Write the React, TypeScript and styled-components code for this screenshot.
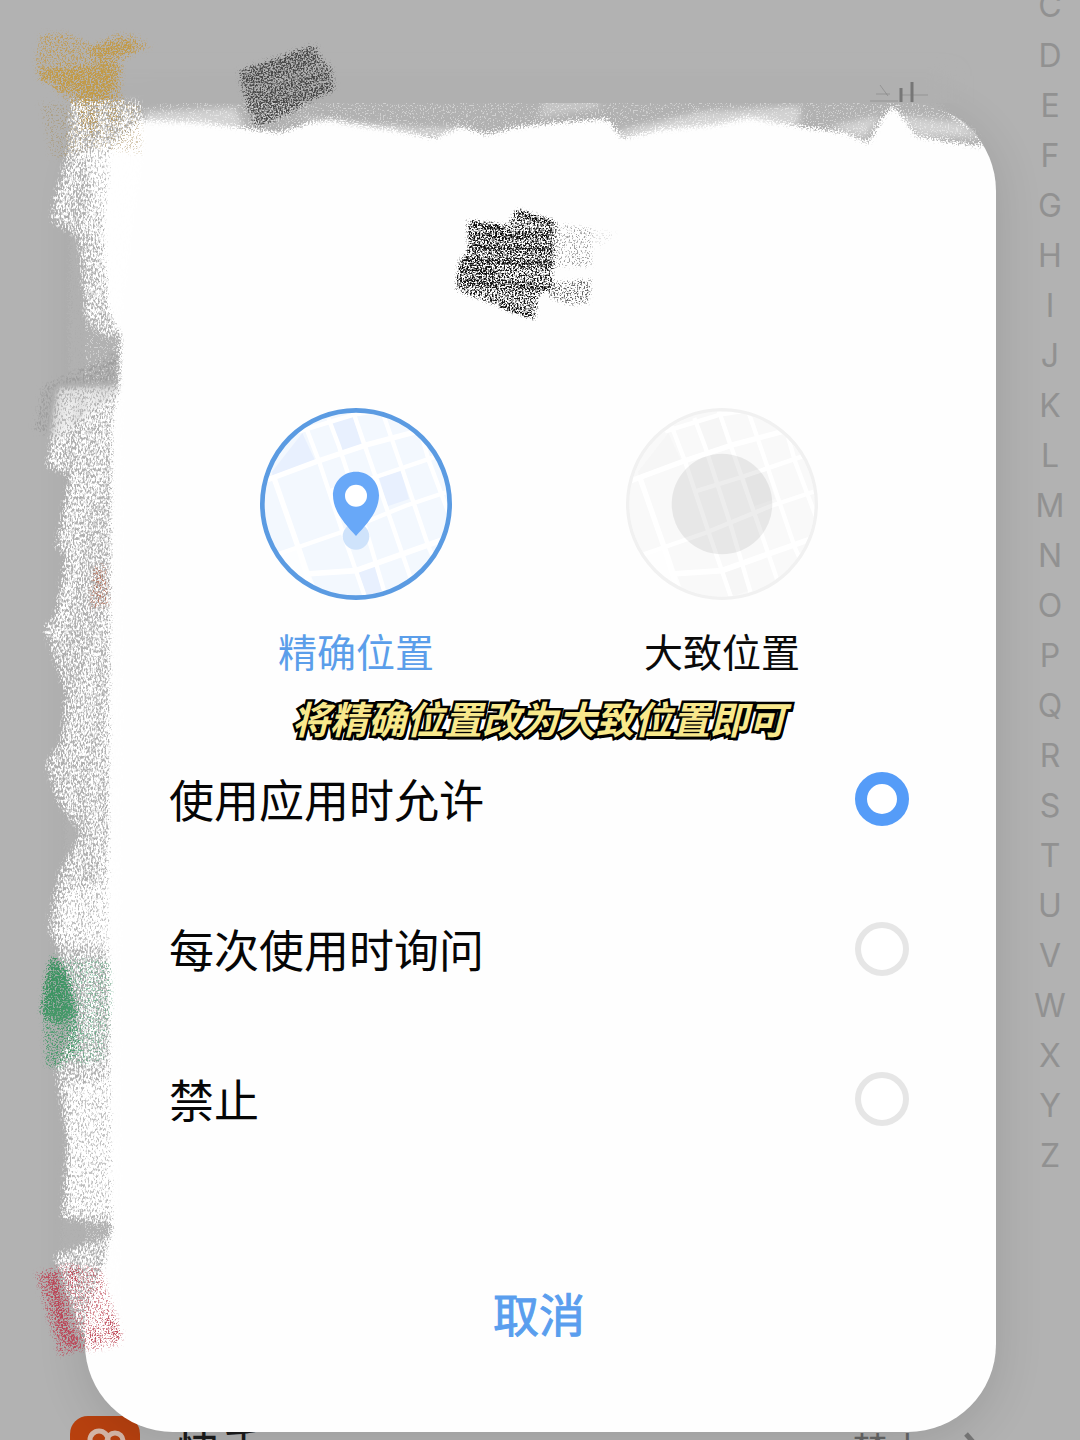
import React, { useState } from "react";
import styled, { createGlobalStyle } from "styled-components";

const GlobalStyle = createGlobalStyle`
  *, *::before, *::after { box-sizing: border-box; }
  body {
    margin: 0;
    background: #b2b2b2;
    font-family: "Noto Sans CJK SC", "Noto Sans", sans-serif;
  }
`;

const Screen = styled.div`
  position: relative;
  display: grid;
  grid-template: 100vh / 1fr;
  overflow: hidden;
  background: #b2b2b2;
  & > * { grid-area: 1 / 1; }
`;

/* ---------- app list behind the dialog ---------- */

const Backdrop = styled.div`
  display: flex;
  justify-content: space-between;
  min-height: 0;
`;

const AppList = styled.main`
  flex: 1;
  display: flex;
  flex-direction: column;
  justify-content: flex-end;
  margin-bottom: -46px;
  padding-left: 70px;
`;

const AppRow = styled.div`
  display: flex;
  align-items: flex-start;
  height: 70px;
  padding-right: 36px;
`;

const AppIcon = styled.svg`
  width: 70px;
  height: 70px;
  border-radius: 18px;
  background: #b8410f;
`;

const AppName = styled.span`
  flex: 1;
  margin-left: 36px;
  color: #1c1c1c;
  font-size: 45px;
  line-height: 64px;
`;

const AppState = styled.span`
  color: #666;
  font-size: 36px;
  line-height: 64px;
`;

const Chevron = styled.svg`
  width: 20px;
  height: 38px;
  margin: 16px 0 0 40px;
`;

const LetterIndex = styled.nav`
  display: flex;
  flex-direction: column;
  width: 60px;
  margin-top: -19px;
`;

const Letter = styled.a`
  flex: none;
  height: 50px;
  color: #919191;
  font-family: Inter, "Liberation Sans", sans-serif;
  font-size: 32px;
  font-weight: 400;
  line-height: 50px;
  text-align: center;
  text-decoration: none;
`;

/* ---------- dialog ---------- */

const Dialog = styled.section`
  align-self: end;
  display: flex;
  flex-direction: column;
  margin: 0 84px 8px 85px;
  padding: 0 87px 80px 84px;
  border-radius: 88px;
  background: #fefefe;
  box-shadow: 0 10px 50px rgba(0, 0, 0, 0.12);
`;

const Header = styled.header`
  display: flex;
  justify-content: center;
  height: 305px;
  padding-top: 95px;
`;

const HeaderArt = styled.svg`
  width: 180px;
  height: 130px;
`;

const Group = styled.fieldset`
  margin: 0;
  padding: 0;
  border: 0;
  min-width: 0;
`;

const AccuracyGroup = styled(Group)`
  display: flex;
  justify-content: center;
  gap: 174px;
`;

const AccuracyChoice = styled.label<{ $on: boolean }>`
  display: flex;
  flex-direction: column;
  align-items: center;
  gap: 23px;
  width: 192px;
  padding-bottom: 3px;
  color: ${(p) => (p.$on ? "#5b9eea" : "#0a0a0a")};
  font-size: 39px;
  line-height: 54px;
  white-space: nowrap;
  cursor: pointer;
`;

const HiddenRadio = styled.input`
  position: absolute;
  opacity: 0;
  pointer-events: none;
`;

const MapArt = styled.svg`
  width: 192px;
  height: 192px;
`;

const Caption = styled.p`
  margin: 0;
  padding-bottom: 3px;
  color: #f8e88c;
  font-size: 38px;
  font-style: italic;
  font-weight: 700;
  line-height: 76px;
  text-align: center;
  white-space: nowrap;
  -webkit-text-stroke: 5px #000;
  paint-order: stroke fill;
  text-shadow: 2px 3px 0 #000;
`;

const OptionGroup = styled(Group)`
  display: flex;
  flex-direction: column;
  gap: 70px;
`;

const Option = styled.label`
  display: flex;
  align-items: center;
  justify-content: space-between;
  height: 80px;
  color: #060606;
  font-size: 45px;
  line-height: 80px;
  cursor: pointer;
`;

const Radio = styled.input`
  appearance: none;
  width: 54px;
  height: 54px;
  margin: 0;
  border: 6px solid #e6e6e6;
  border-radius: 50%;
  background: #fff;
  &:checked { border: 12px solid #559cf8; }
`;

const CancelButton = styled.button`
  align-self: center;
  height: 80px;
  margin-top: 133px;
  padding: 0 40px;
  border: 0;
  background: none;
  color: #5a9eee;
  font: inherit;
  font-size: 46px;
  line-height: 80px;
  -webkit-text-stroke: 1px #5a9eee;
  cursor: pointer;
`;

const ChalkLayer = styled.svg`
  position: absolute;
  top: 0;
  left: 0;
  width: 100%;
  pointer-events: none;
`;

/* ---------- drawings ---------- */

type Palette = { land: string; block: string; ring: string; ringWidth: number };

const precise: Palette = { land: "#f3f8fe", block: "#e8f0fe", ring: "#5b9be2", ringWidth: 14 };
const rough: Palette = { land: "#f9f9f9", block: "#f6f6f6", ring: "#f1f1f1", ringWidth: 10 };

function CityMap({ id, palette, children }: { id: string; palette: Palette; children: React.ReactNode }) {
  return (
    <MapArt viewBox="63 55 576 576" aria-hidden="true">
      <clipPath id={id}><circle cx="351" cy="343" r="278" /></clipPath>
      <g clipPath={`url(#${id})`}>
        <rect x="63" y="55" width="576" height="576" fill={palette.land} />
        <g fill={palette.block}>
          <path d="M100 245 190 130 228 212 100 258Z" />
          <path d="M278 98 340 76 368 165 306 184Z" />
          <path d="M420 264 486 243 510 328 446 350Z" />
          <path d="M358 548 412 528 440 600 384 620Z" />
        </g>
        <g fill="none" stroke="#fff" strokeWidth="13">
          <path d="M60 280 235 215 385 165 600 108" strokeWidth="16" />
          <path d="M180 125 345 75 440 60" />
          <path d="M268 306 410 262 640 184" />
          <path d="M110 496 300 430 500 348 650 298" />
          <path d="M200 553 350 543 640 440" strokeWidth="17" />
          <path d="M196 100 240 215 310 425 384 640" />
          <path d="M268 85 300 170 375 400 446 640" />
          <path d="M342 65 385 190 460 405 520 580" />
          <path d="M428 60 485 225 570 475 600 540" />
          <path d="M540 110 570 215 640 400" />
          <path d="M104 262 180 480 230 640" strokeWidth="16" />
        </g>
        <path d="M95 495 185 468 214 552 240 620 150 580Z" fill="#fff" opacity=".8" />
      </g>
      {children}
      <circle cx="351" cy="343" r={288 - palette.ringWidth / 2} fill="none" stroke={palette.ring} strokeWidth={palette.ringWidth} />
    </MapArt>
  );
}

function Grain({ id, blur, frequency }: { id: string; blur: number; frequency: string }) {
  return (
    <filter id={id} filterUnits="userSpaceOnUse" x="0" y="0" width="1080" height="1440" colorInterpolationFilters="sRGB">
      <feGaussianBlur in="SourceGraphic" stdDeviation={blur} result="soft" />
      <feColorMatrix in="soft" values="0 0 0 0 0  0 0 0 0 0  0 0 0 0 0  0 0 0 1 0" result="shape" />
      <feTurbulence type="fractalNoise" baseFrequency={frequency} numOctaves="2" seed="4" />
      <feColorMatrix values="0 0 0 0 0  0 0 0 0 0  0 0 0 0 0  3 0 0 0 -1" result="noise" />
      <feComposite in="shape" in2="noise" operator="arithmetic" k2="2.2" k3="1.6" k4="-1.6" result="mask" />
      <feComponentTransfer in="soft" result="ink">
        <feFuncA type="linear" slope="3" />
      </feComponentTransfer>
      <feComposite in="ink" in2="mask" operator="in" />
    </filter>
  );
}

function HeaderScribble() {
  return (
    <HeaderArt viewBox="450 198 180 130" aria-hidden="true">
      <defs><Grain id="ink" blur={2} frequency="0.6" /></defs>
      <g filter="url(#ink)">
        <path d="M467 219 508 224 517 208 556 220 554 286 540 296 537 321 456 291 458 262 468 250Z" fill="#161616" opacity=".5" />
        <g fill="none" stroke="#050505" strokeWidth="5" opacity=".45">
          <path d="M472 223 505 229M518 212 553 222M470 237 552 235M470 247 553 250M463 260 552 264M460 268 500 274M458 280 552 289M500 305 532 316" />
        </g>
        <path d="M552 221 594 228 594 268 552 268Z" fill="#444" opacity=".27" />
        <path d="M552 281 594 278 592 304 570 306 548 298Z" fill="#444" opacity=".38" />
        <path d="M590 228 620 232 600 250Z" fill="#bbb" opacity=".25" />
      </g>
    </HeaderArt>
  );
}

function Chalk() {
  return (
    <ChalkLayer viewBox="0 0 1080 1440" aria-hidden="true">
      <defs>
        <Grain id="chalk" blur={3} frequency="0.6" />
        <Grain id="chalkStreak" blur={3} frequency="0.6 0.32" />
        <filter id="smudge" x="-10%" y="-60%" width="120%" height="220%"><feGaussianBlur stdDeviation="10" /></filter>
        <clipPath id="sheetTop"><rect x="0" y="103" width="1080" height="1337" /></clipPath>
        <clipPath id="aboveSheet"><rect x="0" y="0" width="1080" height="103" /></clipPath>
      </defs>

      <g clipPath="url(#aboveSheet)">
        <rect x="90" y="76" width="860" height="40" fill="#b0b0b0" filter="url(#smudge)" />
      </g>
      <g clipPath="url(#sheetTop)">
        <g filter="url(#chalk)">
          <path
            fill="#b1b1b1"
            d="M70 90H925L950 112 975 130 984 147 940 141 915 136 903 118 893 106 884 116 868 144 845 133 800 127 750 117 715 124 660 129 622 139 607 119 560 123 520 127 485 135 460 126 435 139 395 130 360 125 330 119 310 123 280 133 240 128 200 122 140 120 110 150 104 230 108 310 121 336 119 388 112 420 110 640 108 900 110 1100 112 1230 105 1260 80 1335H60Z"
          />
          <path fill="#fff" opacity=".42" d="M145 112 235 108 245 128 145 132ZM300 118 420 128 470 128 440 137 330 130ZM620 130 700 112 800 106 800 124 620 138ZM830 126 880 116 865 138ZM900 116 960 122 980 138 920 136Z" />
          <path fill="#fff" opacity=".25" d="M545 85 590 78 600 108 540 118Z" />
        </g>
      </g>

      <g filter="url(#chalkStreak)">
        <path fill="#9d9d9d" opacity=".5" d="M42 385 120 350 118 390 55 440 32 430Z" />
        <path
          fill="#fff"
          opacity=".56"
          d="M70 98 142 100 145 150 118 340 100 336 84 318 77 238 50 222 52 202 66 152ZM58 388 125 386 122 1228 60 1220 66 1140 54 1072 76 1008 58 955 46 925 58 872 80 832 58 806 44 765 60 740 64 692 42 626 53 618 64 556 54 548 68 476 45 468ZM52 1254 122 1230 124 1348 90 1355Z"
        />
        <g fill="none" stroke="#fff" strokeWidth="8" opacity=".36">
          <path d="M84 104 78 160 62 212M105 108 94 200 96 260M125 112 112 230 100 270M110 160 84 230M108 240 92 320" />
          <path d="M72 400 56 462M92 395 74 500 66 545M108 400 94 500M88 480 68 610M76 560 58 640M112 600 80 700 68 760M96 680 76 780M112 700 92 800M66 780 76 810" />
          <path d="M80 850 66 930M94 800 104 900 88 950M112 840 106 960M72 1080 76 1210M88 1060 90 1215M106 1050 104 1210M90 960 92 1060" />
          <path d="M66 1258 84 1340M84 1250 96 1350" />
        </g>
        <path fill="#fff" opacity=".5" d="M84 150 148 130 135 200 122 320 112 300 100 220ZM62 890 118 880 120 945 58 945ZM68 1085 120 1075 120 1215 68 1215Z" />
      </g>

      <g filter="url(#chalk)">
        <path fill="#c09c54" opacity=".42" d="M40 32 70 32 94 44 115 32 136 34 155 46 125 60 122 95 130 102 72 105 36 78 34 56Z" />
        <path fill="none" stroke="#c4993f" strokeWidth="12" opacity=".5" d="M92 52 134 46M40 76 118 70M58 86 116 84M78 96 110 94M104 60 110 90" />
        <path fill="#a88b58" opacity=".27" d="M38 100 72 104 142 102 144 156 92 150 68 160 50 160Z" />
        <path fill="none" stroke="#c69b4d" strokeWidth="5" opacity=".45" d="M84 106 86 128M96 108 92 132M112 106 114 122" />
        <path fill="#505050" opacity=".48" d="M237 70 316 43 323 60 332 64 336 90 256 130 245 106Z" />
        <path fill="none" stroke="#3b3b3b" strokeWidth="6" opacity=".4" d="M241 74 314 49M243 84 320 58M248 98 328 74M250 108 332 88M256 122 300 106" />
        <path fill="#b1664f" opacity=".38" d="M92 566 108 562 110 607 88 610Z" />
        <path fill="#3f9463" opacity=".8" d="M52 952 68 975 76 1012 60 1024 40 1015 44 980Z" />
        <path fill="#4a9a6c" opacity=".46" d="M42 1010 76 1008 78 1050 62 1070 44 1068Z" />
        <path fill="#4ea277" opacity=".3" d="M60 955 112 958 114 1005 106 1062 74 1068Z" />
        <path fill="#bd5564" opacity=".48" d="M34 1272 58 1266 84 1350 58 1358Z" />
        <path fill="none" stroke="#ba384b" strokeWidth="7" opacity=".5" d="M52 1276 64 1332 76 1346" />
        <path fill="#c45a68" opacity=".34" d="M58 1262 102 1266 124 1334 122 1346 84 1354Z" />
        <path fill="none" stroke="#b9384c" strokeWidth="8" opacity=".3" d="M92 1330 98 1344M108 1318 118 1340M72 1266 74 1286" />
      </g>

      <g stroke="#777" fill="none">
        <path strokeWidth="3" d="M901 88V102M912 82V102" />
        <path strokeWidth="1" opacity=".5" d="M870 101H898M880 85 888 96M902 95H928M876 94H890" />
      </g>
    </ChalkLayer>
  );
}

const letters = "CDEFGHIJKLMNOPQRSTUVWXYZ".split("");
const options = ["使用应用时允许", "每次使用时询问", "禁止"];

export default function App() {
  const [accuracy, setAccuracy] = useState("precise");
  const [option, setOption] = useState(options[0]);

  return (
    <>
      <GlobalStyle />
      <Screen>
        <Backdrop>
          <AppList>
            <AppRow>
              <AppIcon viewBox="0 0 70 70" aria-hidden="true">
                <g fill="none" stroke="#d6b7a8" strokeWidth="5">
                  <circle cx="29" cy="24" r="9" />
                  <circle cx="45" cy="25" r="8" />
                  <rect x="25" y="38" width="30" height="22" rx="6" />
                </g>
              </AppIcon>
              <AppName>快手</AppName>
              <AppState>禁止</AppState>
              <Chevron viewBox="0 0 20 38" aria-hidden="true">
                <path d="M2 2 17 19 2 36" fill="none" stroke="#777" strokeWidth="5" />
              </Chevron>
            </AppRow>
          </AppList>
          <LetterIndex>
            {letters.map((l) => (
              <Letter key={l} href={`#${l}`}>{l}</Letter>
            ))}
          </LetterIndex>
        </Backdrop>

        <Dialog role="dialog">
          <Header><HeaderScribble /></Header>

          <AccuracyGroup>
            <AccuracyChoice $on={accuracy === "precise"}>
              <HiddenRadio type="radio" name="accuracy" checked={accuracy === "precise"} onChange={() => setAccuracy("precise")} />
              <CityMap id="preciseMap" palette={precise}>
                <circle cx="351" cy="440" r="40" fill="#cfe3fb" />
                <path
                  fill="#68a8f8"
                  fillRule="evenodd"
                  d="M351 246c-39 0-69 31-69 71 0 48 38 88 69 122 31-34 69-74 69-122 0-40-30-71-69-71Z"
                />
                <circle cx="351" cy="318" r="33" fill="#fff" />
              </CityMap>
              精确位置
            </AccuracyChoice>
            <AccuracyChoice $on={accuracy === "rough"}>
              <HiddenRadio type="radio" name="accuracy" checked={accuracy === "rough"} onChange={() => setAccuracy("rough")} />
              <CityMap id="roughMap" palette={rough}>
                <circle cx="351" cy="343" r="151" fill="#000" opacity=".07" />
              </CityMap>
              大致位置
            </AccuracyChoice>
          </AccuracyGroup>

          <Caption>将精确位置改为大致位置即可</Caption>

          <OptionGroup>
            {options.map((text) => (
              <Option key={text}>
                {text}
                <Radio type="radio" name="permission" checked={option === text} onChange={() => setOption(text)} />
              </Option>
            ))}
          </OptionGroup>

          <CancelButton type="button">取消</CancelButton>
        </Dialog>

        <Chalk />
      </Screen>
    </>
  );
}
